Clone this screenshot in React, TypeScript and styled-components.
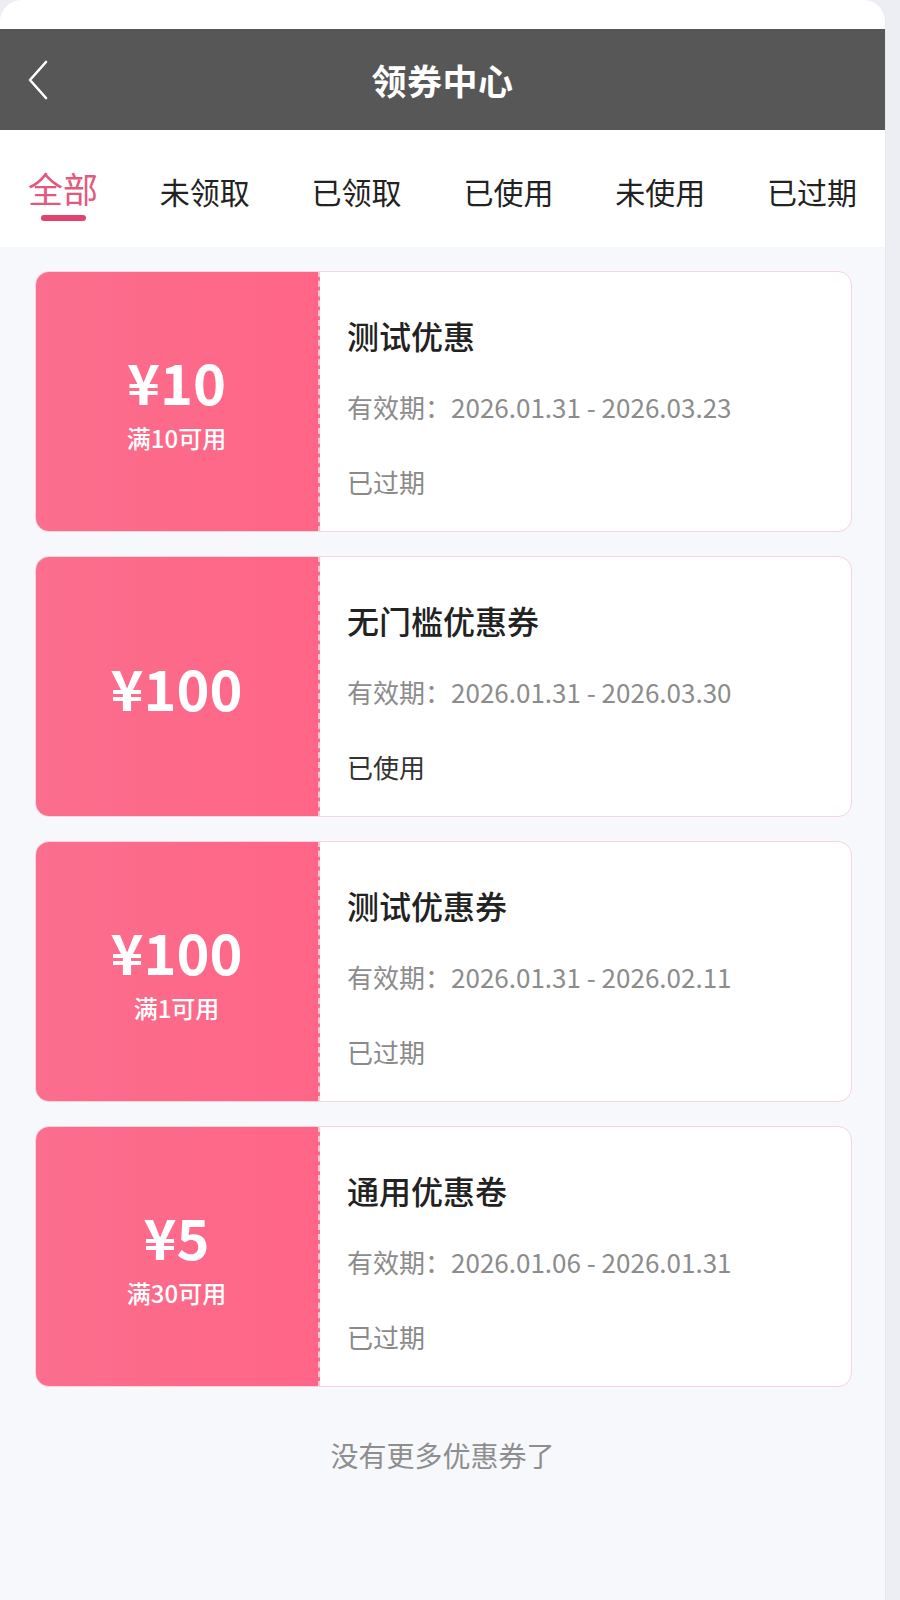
import React from "react";
import styled, { createGlobalStyle } from "styled-components";

const GlobalStyle = createGlobalStyle`
  html, body {
    margin: 0;
    padding: 0;
    background: #eceef4;
  }
  body {
    font-family: "Noto Sans CJK SC", "Noto Sans", sans-serif;
  }
  * { box-sizing: border-box; }
`;

const Page = styled.div`
  width: 886px;
  min-height: 1600px;
  background: #f7f8fc;
  border-top-left-radius: 22px;
  border-top-right-radius: 22px;
  border-right: 1px solid #e6e8ee;
  overflow: hidden;
  display: flex;
  flex-direction: column;
`;

const StatusSpace = styled.div`
  height: 29px;
  background: #ffffff;
`;

const NavBar = styled.header`
  height: 101px;
  background: #575757;
  display: flex;
  align-items: center;
  justify-content: center;
  position: relative;
`;

const BackButton = styled.button`
  position: absolute;
  left: 22px;
  top: 50%;
  transform: translateY(-50%);
  background: none;
  border: none;
  padding: 4px;
  display: flex;
  cursor: pointer;
`;

const NavTitle = styled.h1`
  margin: 0;
  color: #ffffff;
  font-size: 35px;
  font-weight: 700;
  letter-spacing: 0.5px;
`;

const Tabs = styled.nav`
  height: 117px;
  background: #ffffff;
  display: flex;
  justify-content: space-between;
  align-items: flex-start;
  padding: 0 28px;
`;

const Tab = styled.div<{ $active?: boolean }>`
  position: relative;
  display: flex;
  flex-direction: column;
  align-items: center;
  padding-top: ${(p) => (p.$active ? "36px" : "41px")};
  font-size: ${(p) => (p.$active ? "35px" : "30px")};
  line-height: ${(p) => (p.$active ? "44px" : "40px")};
  color: ${(p) => (p.$active ? "#e15a7e" : "#222222")};
`;

const TabBar = styled.span`
  display: block;
  width: 45px;
  height: 6px;
  border-radius: 3px;
  background: #e2426e;
  margin-top: 5px;
`;

const List = styled.main`
  display: flex;
  flex-direction: column;
  gap: 24px;
  padding: 24px 33px 0 35px;
`;

const Card = styled.div`
  height: 261px;
  display: flex;
  border-radius: 14px;
  border: 1px solid #f6d4dd;
  background: #ffffff;
  overflow: hidden;
`;

const Stub = styled.div`
  width: 285px;
  flex-shrink: 0;
  margin: -1px 0 -1px -1px;
  background: linear-gradient(90deg, #fb6e8d 0%, #ff6587 100%);
  border-right: 2px dashed #ffc7d4;
  display: flex;
  flex-direction: column;
  align-items: center;
  justify-content: center;
  color: #ffffff;
`;

const Amount = styled.div`
  font-size: 56px;
  font-weight: 700;
  line-height: 60px;
`;

const Condition = styled.div`
  font-size: 24px;
  font-weight: 500;
  line-height: 30px;
  margin-top: 12px;
`;

const Info = styled.div`
  flex: 1;
  display: flex;
  flex-direction: column;
  padding: 43px 0 0 27px;
`;

const CouponName = styled.div`
  font-size: 32px;
  font-weight: 500;
  line-height: 40px;
  color: #222222;
`;

const Validity = styled.div`
  font-size: 26px;
  line-height: 36px;
  color: #8c8c8c;
  margin-top: 34px;
`;

const Status = styled.div<{ $used?: boolean }>`
  font-size: 26px;
  line-height: 36px;
  color: ${(p) => (p.$used ? "#333333" : "#8a8a8a")};
  margin-top: 39px;
`;

const EndNote = styled.div`
  text-align: center;
  font-size: 28px;
  color: #8e8e8e;
  margin-top: 48px;
  line-height: 40px;
`;

type Coupon = {
  amount: string;
  cond?: string;
  name: string;
  from: string;
  to: string;
  status: string;
};

const coupons: Coupon[] = [
  { amount: "¥10", cond: "满10可用", name: "测试优惠", from: "2026.01.31", to: "2026.03.23", status: "已过期" },
  { amount: "¥100", name: "无门槛优惠券", from: "2026.01.31", to: "2026.03.30", status: "已使用" },
  { amount: "¥100", cond: "满1可用", name: "测试优惠券", from: "2026.01.31", to: "2026.02.11", status: "已过期" },
  { amount: "¥5", cond: "满30可用", name: "通用优惠卷", from: "2026.01.06", to: "2026.01.31", status: "已过期" },
];

const tabs = ["全部", "未领取", "已领取", "已使用", "未使用", "已过期"];

export default function App() {
  return (
    <>
      <GlobalStyle />
      <Page>
        <StatusSpace />
        <NavBar>
          <BackButton aria-label="返回">
            <svg width="24" height="42" viewBox="0 0 24 42" fill="none">
              <polyline points="20,3 4,21 20,39" stroke="#ffffff" strokeWidth="2.6" strokeLinecap="round" strokeLinejoin="round" />
            </svg>
          </BackButton>
          <NavTitle>领券中心</NavTitle>
        </NavBar>
        <Tabs>
          {tabs.map((t, i) => (
            <Tab key={t} $active={i === 0}>
              {t}
              {i === 0 && <TabBar />}
            </Tab>
          ))}
        </Tabs>
        <List>
          {coupons.map((c, i) => (
            <Card key={i}>
              <Stub>
                <Amount>{c.amount}</Amount>
                {c.cond && <Condition>{c.cond}</Condition>}
              </Stub>
              <Info>
                <CouponName>{c.name}</CouponName>
                <Validity>
                  有效期：{c.from} - {c.to}
                </Validity>
                <Status $used={c.status === "已使用"}>{c.status}</Status>
              </Info>
            </Card>
          ))}
        </List>
        <EndNote>没有更多优惠券了</EndNote>
      </Page>
    </>
  );
}
